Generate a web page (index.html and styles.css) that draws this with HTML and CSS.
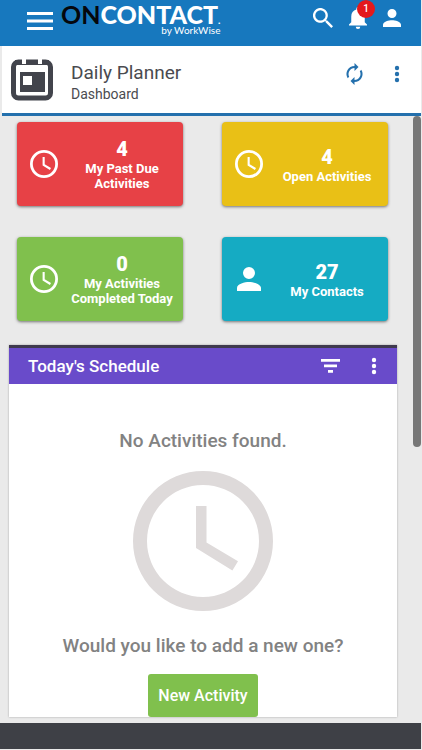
FILE: index.html
```html
<!DOCTYPE html>
<html lang="en">
<head>
<meta charset="utf-8">
<meta name="viewport" content="width=device-width, initial-scale=1">
<title>Daily Planner</title>
<link rel="stylesheet" href="styles.css">
</head>
<body>
<svg class="defs" aria-hidden="true">
  <symbol id="clock" viewBox="2 2 20 20"><path d="M12 2a10 10 0 1 0 0 20 10 10 0 0 0 0-20zm0 18a8 8 0 1 1 0-16 8 8 0 0 1 0 16zm.5-13H11v6l5.200 3.200.800-1.300-4.500-2.700z"/></symbol>
  <symbol id="person" viewBox="4 4 16 16"><path d="M12 12a4 4 0 1 0 0-8 4 4 0 0 0 0 8zm0 2c-2.700 0-8 1.300-8 4v2h16v-2c0-2.700-5.300-4-8-4z"/></symbol>
  <symbol id="dots" viewBox="0 0 6 18"><circle cx="3" cy="3" r="2.200"/><circle cx="3" cy="9" r="2.200"/><circle cx="3" cy="15" r="2.200"/></symbol>
</svg>
<header class="topbar">
  <button class="icon-btn menu" aria-label="Menu"><svg width="26" height="18" viewBox="0 0 26 18"><path d="M0 0h26v3H0zM0 7.500h26v3H0zM0 15h26v3H0z"/></svg></button>
  <a class="logo" href="#"><span class="name"><span class="on">ON</span>CONTACT<span class="dot">.</span></span><span class="by">by WorkWise</span></a>
  <nav class="actions">
    <button class="icon-btn" aria-label="Search"><svg width="20" height="20" viewBox="3 3 17.500 17.500"><path d="M15.500 14h-.8l-.3-.3A6.500 6.500 0 1 0 13.700 14.400l.3.300v.8l5 5 1.500-1.500zm-6 0a4.500 4.500 0 1 1 0-9 4.500 4.500 0 0 1 0 9z"/></svg></button>
    <button class="icon-btn bell" aria-label="Notifications"><svg width="18" height="22" viewBox="4 2.500 16 19.500"><path d="M12 22a2 2 0 0 0 2-2h-4a2 2 0 0 0 2 2zm6-6v-5c0-3.100-1.600-5.600-4.500-6.300V4a1.500 1.500 0 0 0-3 0v.7C7.600 5.400 6 7.900 6 11v5l-2 2v1h16v-1z"/></svg><span class="badge">1</span></button>
    <button class="icon-btn" aria-label="Account"><svg width="18" height="18"><use href="#person"/></svg></button>
  </nav>
</header>
<section class="titlebar">
  <svg class="calendar" width="42" height="42" viewBox="0 0 42 42"><rect x="2.500" y="3" width="37" height="36" rx="5" fill="none" stroke="#42444c" stroke-width="5"/><path fill="#42444c" d="M4 1h34v5H4z"/><path fill="#fff" d="M11 0h4v5h-4zM27 0h4v5h-4z"/><path fill="#42444c" d="M9 13h25v20H9z"/><path fill="#fff" d="M12 17h9v9h-9z"/></svg>
  <div class="heading"><h1>Daily Planner</h1><p>Dashboard</p></div>
  <div class="tools">
    <button class="icon-btn" aria-label="Refresh"><svg width="17" height="22" viewBox="4 1 16 22"><path d="M12 6v3l4-4-4-4v3a8 8 0 0 0-6.800 12.200l1.500-1.400A6 6 0 0 1 12 6zm6.800 1.800-1.500 1.400A6 6 0 0 1 12 18v-3l-4 4 4 4v-3a8 8 0 0 0 6.800-12.200z"/></svg></button>
    <button class="icon-btn" aria-label="More options"><svg width="6" height="18"><use href="#dots"/></svg></button>
  </div>
</section>
<div class="viewport">
  <main>
    <div class="cards">
      <a class="card red" href="#"><svg><use href="#clock"/></svg><span class="text"><strong>4</strong>My Past Due Activities</span></a>
      <a class="card yellow" href="#"><svg><use href="#clock"/></svg><span class="text"><strong>4</strong>Open Activities</span></a>
      <a class="card green" href="#"><svg><use href="#clock"/></svg><span class="text"><strong>0</strong>My Activities Completed Today</span></a>
      <a class="card teal" href="#"><svg class="small"><use href="#person"/></svg><span class="text"><strong>27</strong>My Contacts</span></a>
    </div>
    <section class="panel">
      <div class="panel-head">
        <h2>Today's Schedule</h2>
        <button class="icon-btn" aria-label="Filter"><svg width="19" height="14" viewBox="0 0 19 14"><path d="M0 0h19v2.800H0zM3 5.500h13v2.800H3zM7 11h5v2.800H7z"/></svg></button>
        <button class="icon-btn" aria-label="Schedule options"><svg width="6" height="18"><use href="#dots"/></svg></button>
      </div>
      <div class="panel-body">
        <p>No Activities found.</p>
        <svg class="big-clock"><use href="#clock"/></svg>
        <p>Would you like to add a new one?</p>
        <button class="new">New Activity</button>
      </div>
    </section>
  </main>
  <div class="track"><div class="thumb"></div></div>
</div>
<footer></footer>
</body>
</html>
```
FILE: styles.css
```css
* { box-sizing: border-box; margin: 0; }
body {
  min-height: 100vh;
  display: flex;
  flex-direction: column;
  padding-right: 1px;
  background: #eaeaea;
  font-family: Roboto, sans-serif;
  color: #4a4b50;
}
.defs { position: absolute; width: 0; height: 0; }
svg { display: block; fill: currentColor; }
a { color: inherit; text-decoration: none; }
.icon-btn { border: 0; padding: 0; background: none; color: inherit; }

.topbar {
  display: flex;
  align-items: flex-start;
  height: 46px;
  padding: 0 20px 0 27px;
  background: #1778be;
  color: #fff;
}
.menu { margin-top: 12px; }
.logo { display: flex; flex-direction: column; margin-left: 8px; font-family: Lato, sans-serif; }
.name { font-size: 25px; line-height: 28px; font-weight: 900; }
.on { color: #05070c; font-weight: 700; }
.dot { font-size: 10px; line-height: 1px; }
.by { align-self: flex-end; font-size: 10px; line-height: 12px; margin-top: -4px; }
.actions { display: flex; align-items: center; gap: 16px; margin: 7px 0 0 auto; }
.bell { position: relative; }
.badge {
  position: absolute;
  top: -7px;
  right: -8px;
  width: 18px;
  height: 18px;
  border-radius: 50%;
  background: #e3191c;
  font: 500 10px/18px Roboto, sans-serif;
}

.titlebar {
  display: flex;
  align-items: center;
  height: 70px;
  margin-left: 2px;
  padding: 0 21px 0 9px;
  background: #fff;
  border-bottom: 3px solid #2470ad;
}
.heading { flex: 1; margin-left: 18px; padding-top: 6px; }
.heading h1 { font-size: 19px; line-height: 22px; font-weight: 400; }
.heading p { font-size: 14px; line-height: 20px; }
.tools { display: flex; align-items: center; gap: 31px; padding-bottom: 12px; color: #2470ad; }

.viewport { flex: 1; display: flex; margin-left: 3px; }
main { flex: 1; padding: 6px 16px 0 6px; }
.track { width: 8px; }
.thumb { height: 55%; background: #777; border-radius: 4px; }

.cards { display: grid; grid-template-columns: 1fr 1fr; gap: 31px 39px; padding: 0 9px 0 8px; }
.card {
  display: flex;
  align-items: center;
  height: 84px;
  padding-left: 13px;
  border-radius: 4px;
  box-shadow: 0 1px 3px #00000080;
  color: #fff;
}
.card svg { width: 28px; height: 28px; }
.card .small { width: 24px; height: 24px; margin: 0 2px; }
.text { flex: 1; padding: 0 6px 0 9px; text-align: center; font-size: 13px; line-height: 15px; font-weight: 700; }
.text strong { display: block; font-size: 20px; line-height: 24px; }
.red { background: #e74146; }
.yellow { background: #e9c016; }
.green { background: #80c04d; }
.teal { background: #15abc3; }

.panel { margin-top: 24px; border-top: 3px solid #3f3a4e; background: #fff; box-shadow: 0 0 2px #0000004d; }
.panel-head {
  display: flex;
  align-items: center;
  gap: 31px;
  height: 36px;
  padding: 0 20px 0 19px;
  background: #694bca;
  color: #fff;
}
.panel-head h2 { flex: 1; font-size: 17px; line-height: 20px; font-weight: 500; }
.panel-body { display: flex; flex-direction: column; align-items: center; padding-top: 45px; }
.panel-body p { font-size: 19px; line-height: 24px; font-weight: 500; color: #828282; }
.big-clock { width: 140px; height: 140px; margin: 18px 0 23px; color: #dedada; }
.new {
  margin-top: 16px;
  height: 43px;
  padding: 0 10px;
  border: 0;
  border-radius: 3px;
  background: #80c04d;
  color: #fff;
  font: 500 16px/20px Roboto, sans-serif;
}
footer { height: 27px; margin-top: 5px; background: #3e4046; border-bottom: 1px solid #eaeaea; }
```
